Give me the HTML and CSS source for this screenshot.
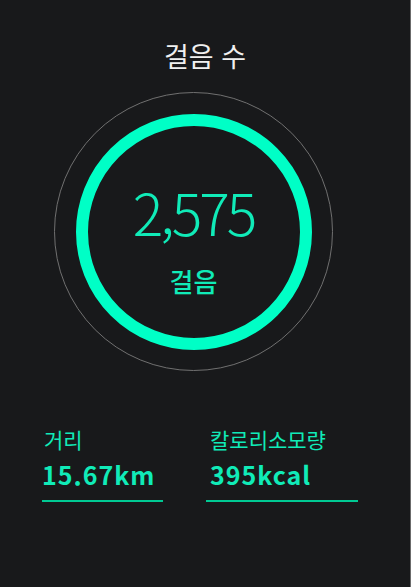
FILE: index.html
```html
<!DOCTYPE html>
<html lang="ko">
<head>
<meta charset="utf-8">
<link rel="stylesheet" href="styles.css">
</head>
<body>
<div class="screen">
  <h1 class="title">걸음 수</h1>
  <div class="gauge">
    <div class="ring">
      <div class="count">2,575</div>
      <div class="unit">걸음</div>
    </div>
  </div>
  <div class="stats">
    <div class="stat stat-distance">
      <div class="label">거리</div>
      <div class="value">15.67km</div>
    </div>
    <div class="stat stat-calorie">
      <div class="label">칼로리소모량</div>
      <div class="value">395kcal</div>
    </div>
  </div>
</div>
</body>
</html>
```
FILE: styles.css
```css
html, body {
  margin: 0;
  padding: 0;
  background: #18191b;
}
.screen {
  width: 410px;
  height: 587px;
  border-right: 1px solid #6b6b6b;
  background: #18191b;
  font-family: "Noto Sans CJK KR", "Noto Sans", sans-serif;
  display: flex;
  flex-direction: column;
  overflow: hidden;
}
.title {
  margin: 38px 0 0 0;
  text-align: center;
  font-size: 27px;
  font-weight: 400;
  line-height: 36px;
  color: #f0f0f0;
}
.gauge {
  margin: 18px 0 0 54px;
  width: 279px;
  height: 279px;
  box-sizing: border-box;
  border: 1px solid #707070;
  border-radius: 50%;
  display: flex;
  align-items: center;
  justify-content: center;
}
.ring {
  width: 236px;
  height: 236px;
  box-sizing: border-box;
  border: 12px solid #00ffc6;
  border-radius: 50%;
  display: flex;
  flex-direction: column;
  align-items: center;
  justify-content: center;
  color: #10ebb8;
}
.count {
  font-family: "Noto Sans CJK KR", "Noto Sans", sans-serif;
  font-weight: 300;
  font-size: 57px;
  line-height: 60px;
  letter-spacing: -3px;
  margin-top: 14px;
}
.unit {
  font-size: 26px;
  line-height: 32px;
  margin-top: 24px;
  font-weight: 500;
}
.stats {
  display: flex;
  margin: 54px 0 0 42px;
  gap: 43px;
}
.stat {
  display: flex;
  flex-direction: column;
  border-bottom: 2px solid #00c993;
  padding-bottom: 11px;
}
.stat-distance { width: 121px; }
.stat-calorie { width: 152px; }
.label {
  font-size: 21px;
  line-height: 28px;
  color: #10ebb8;
  padding-left: 2px;
}
.stat-calorie .label, .stat-calorie .value { padding-left: 4px; }
.value {
  font-size: 25px;
  line-height: 30px;
  margin-top: 6px;
  font-weight: 700;
  letter-spacing: 1px;
  color: #10ebb8;
}
```
